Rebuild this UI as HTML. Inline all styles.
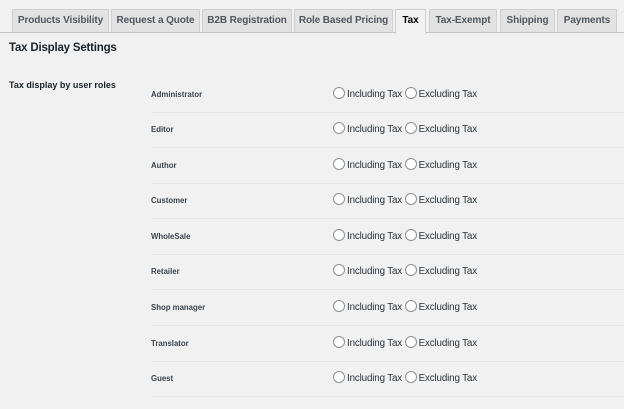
<!DOCTYPE html>
<html><head><style>
body{margin:0;width:624px;height:409px;background:#f1f1f1;font-family:"Liberation Sans",sans-serif;color:#1d2327;position:relative;overflow:hidden}
.tabs{position:absolute;left:0;top:0;width:624px;height:32px;border-bottom:1px solid #c3c4c7}
.tab{position:absolute;top:9px;height:22px;background:#e2e2e2;border:1px solid #cfcfd1;border-bottom:none;font-size:10px;font-weight:bold;color:#50575e;text-align:center;line-height:22px;letter-spacing:-0.1px}
.tab.act{background:#f1f1f1;color:#000;height:24px}
h2{position:absolute;left:9px;top:42px;margin:0;font-size:11.5px;font-weight:bold;letter-spacing:-0.2px}
.lbl{position:absolute;left:9px;top:80px;font-size:9px;font-weight:bold}
.row{position:absolute;left:151px;width:473px;height:35px;border-bottom:1px solid #e6e6e8}
.role{position:absolute;left:0;top:0;line-height:35px;font-size:7.8px;font-weight:bold;color:#3c434a}
.opt{position:absolute;left:182px;top:0;line-height:35px;font-size:9.8px;color:#2c3338;white-space:nowrap;letter-spacing:-0.15px}
.c{display:inline-block;width:10px;height:10px;border:1px solid #8c8f94;border-radius:50%;background:#fff;vertical-align:-2px;margin-right:2px}
</style></head><body>
<div class="tabs">
<div class="tab" style="left:12px;width:95px">Products Visibility</div>
<div class="tab" style="left:111px;width:87px">Request a Quote</div>
<div class="tab" style="left:202px;width:88px">B2B Registration</div>
<div class="tab" style="left:294px;width:97px">Role Based Pricing</div>
<div class="tab act" style="left:395px;width:29px">Tax</div>
<div class="tab" style="left:429px;width:66px">Tax-Exempt</div>
<div class="tab" style="left:500px;width:53px">Shipping</div>
<div class="tab" style="left:557px;width:58px">Payments</div>
</div>
<h2>Tax Display Settings</h2>
<div class="lbl">Tax display by user roles</div>
<div class="row" style="top:77px"><span class="role">Administrator</span><span class="opt"><i class="c"></i>Including Tax <i class="c"></i>Excluding Tax</span></div>
<div class="row" style="top:112px"><span class="role">Editor</span><span class="opt"><i class="c"></i>Including Tax <i class="c"></i>Excluding Tax</span></div>
<div class="row" style="top:148px"><span class="role">Author</span><span class="opt"><i class="c"></i>Including Tax <i class="c"></i>Excluding Tax</span></div>
<div class="row" style="top:183px"><span class="role">Customer</span><span class="opt"><i class="c"></i>Including Tax <i class="c"></i>Excluding Tax</span></div>
<div class="row" style="top:219px"><span class="role">WholeSale</span><span class="opt"><i class="c"></i>Including Tax <i class="c"></i>Excluding Tax</span></div>
<div class="row" style="top:254px"><span class="role">Retailer</span><span class="opt"><i class="c"></i>Including Tax <i class="c"></i>Excluding Tax</span></div>
<div class="row" style="top:290px"><span class="role">Shop manager</span><span class="opt"><i class="c"></i>Including Tax <i class="c"></i>Excluding Tax</span></div>
<div class="row" style="top:326px"><span class="role">Translator</span><span class="opt"><i class="c"></i>Including Tax <i class="c"></i>Excluding Tax</span></div>
<div class="row" style="top:361px"><span class="role">Guest</span><span class="opt"><i class="c"></i>Including Tax <i class="c"></i>Excluding Tax</span></div>
</body></html>
